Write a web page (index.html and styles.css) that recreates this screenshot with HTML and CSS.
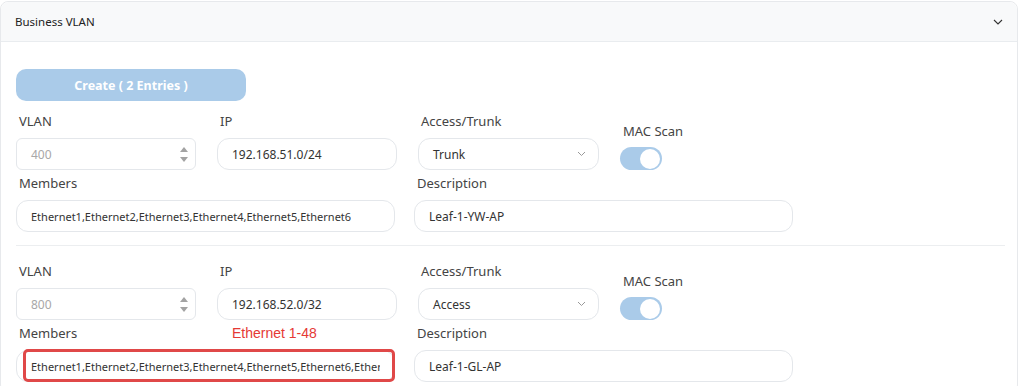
FILE: index.html
```html
<!DOCTYPE html>
<html lang="en">
<head>
  <meta charset="UTF-8" />
  <title>Business VLAN</title>
  <link rel="stylesheet" href="styles.css">
</head>
<body>

<section class="card">
  <div class="card-header">
    <span>Business VLAN</span>
    <svg class="chev" width="10" height="6" viewBox="0 0 10 6"><path d="M1 1l4 4 4-4" fill="none" stroke="#333" stroke-width="1.1"/></svg>
  </div>

  <div class="card-body">
    <button class="btn-create" disabled>Create ( 2 Entries )</button>

    <!-- entry 1 -->
    <div class="entry">
      <div class="field">
        <label>VLAN</label>
        <div class="ctl ctl-num">
          <span class="muted">400</span>
          <span class="spin"><i class="up"></i><i class="down"></i></span>
        </div>
      </div>
      <div class="field">
        <label>IP</label>
        <div class="ctl">192.168.51.0/24</div>
      </div>
      <div class="field">
        <label>Access/Trunk</label>
        <div class="ctl ctl-select">
          <span>Trunk</span>
          <svg width="9" height="6" viewBox="0 0 9 6"><path d="M1 1l3.5 3.5L8 1" fill="none" stroke="#999" stroke-width="1"/></svg>
        </div>
      </div>
      <div class="field field-mac">
        <label>MAC Scan</label>
        <div class="toggle"><span class="knob"></span></div>
      </div>

      <div class="field span-2">
        <label>Members</label>
        <div class="ctl ctl-long"><span class="clip">Ethernet1,Ethernet2,Ethernet3,Ethernet4,Ethernet5,Ethernet6</span></div>
      </div>
      <div class="field span-2 desc">
        <label>Description</label>
        <div class="ctl">Leaf-1-YW-AP</div>
      </div>
    </div>

    <hr class="divider">

    <!-- entry 2 -->
    <div class="entry">
      <div class="field">
        <label>VLAN</label>
        <div class="ctl ctl-num">
          <span class="muted">800</span>
          <span class="spin"><i class="up"></i><i class="down"></i></span>
        </div>
      </div>
      <div class="field">
        <label>IP</label>
        <div class="ctl">192.168.52.0/32</div>
      </div>
      <div class="field">
        <label>Access/Trunk</label>
        <div class="ctl ctl-select">
          <span>Access</span>
          <svg width="9" height="6" viewBox="0 0 9 6"><path d="M1 1l3.5 3.5L8 1" fill="none" stroke="#999" stroke-width="1"/></svg>
        </div>
      </div>
      <div class="field field-mac">
        <label>MAC Scan</label>
        <div class="toggle"><span class="knob"></span></div>
      </div>

      <div class="field span-2 marked">
        <label>Members</label>
        <span class="note">Ethernet 1-48</span>
        <div class="ctl ctl-long"><span class="clip">Ethernet1,Ethernet2,Ethernet3,Ethernet4,Ethernet5,Ethernet6,Ethernet7,Ethernet8</span></div>
        <span class="highlight"></span>
      </div>
      <div class="field span-2 desc">
        <label>Description</label>
        <div class="ctl">Leaf-1-GL-AP</div>
      </div>
    </div>
  </div>
</section>

</body>
</html>
```

FILE: styles.css
```css
* {
  margin: 0;
  padding: 0;
  box-sizing: border-box;
}
body {
  background: #fff;
  font-family: 'Noto Sans', sans-serif;
  color: #333;
  height: 386px;
  overflow: hidden;
}
.card {
  margin: 1px 2px 0 0;
  border: 1px solid #e7e9ec;
  border-radius: 8px;
  height: 392px;
}
.card-header {
  height: 40px;
  background: #f8f9fa;
  border-bottom: 1px solid #e9ecef;
  border-radius: 8px 8px 0 0;
  padding: 0 14px;
  display: flex;
  align-items: center;
  justify-content: space-between;
  font-size: 11.5px;
  color: #222;
}
.card-body {
  padding: 27px 0 0 15px;
}
.btn-create {
  width: 230px;
  height: 32px;
  border: none;
  border-radius: 10px;
  background: #aacbe9;
  color: #fff;
  font-family: 'Noto Sans', sans-serif;
  font-weight: 700;
  font-size: 12.5px;
  margin-bottom: 11px;
}
/* entry grid */
.entry {
  display: grid;
  grid-template-columns: 180px 180px 181px 90px;
  column-gap: 21px;
  row-gap: 4px;
}
.field label {
  display: block;
  font-size: 13px;
  line-height: 18px;
  color: #444;
  padding-left: 3px;
  margin-bottom: 8px;
  white-space: nowrap;
}
.span-2 {
  grid-column: span 2;
  width: 379px;
}
.desc {
  margin-left: -4px;
}
.field-mac {
  padding-top: 10px;
}
.field-mac label {
  margin-bottom: 7px;
}
.ctl {
  height: 32px;
  border: 1px solid #e4e7eb;
  border-radius: 12px;
  padding: 0 14px;
  display: flex;
  align-items: center;
  font-size: 12px;
  color: #333;
  background: #fff;
}
.ctl-long {
  font-size: 11px;
}
.ctl-num {
  border-radius: 6px;
  justify-content: space-between;
  padding-right: 7px;
}
.muted {
  color: #a8a8a8;
}
.spin {
  display: flex;
  flex-direction: column;
  gap: 5px;
}
.spin i {
  width: 0;
  height: 0;
  border-left: 4px solid transparent;
  border-right: 4px solid transparent;
}
.spin .up {
  border-bottom: 5px solid #a3a3a3;
}
.spin .down {
  border-top: 5px solid #a3a3a3;
}
.ctl-select {
  justify-content: space-between;
  padding-right: 12px;
}
.clip {
  white-space: nowrap;
  overflow: hidden;
}
.toggle {
  width: 42px;
  height: 23px;
  border-radius: 12px;
  background: #aacbe9;
  display: flex;
  justify-content: flex-end;
  align-items: center;
  padding: 2px;
}
.knob {
  width: 20px;
  height: 20px;
  border-radius: 50%;
  background: #fff;
}
.divider {
  border: none;
  border-top: 1px solid #eceef0;
  margin: 13px 12px 16px 0;
}
/* annotation */
.marked {
  position: relative;
}
.note {
  position: absolute;
  left: 216px;
  top: 1px;
  font-family: 'Liberation Sans', Arial, sans-serif;
  font-size: 14px;
  color: #e53935;
}
.highlight {
  position: absolute;
  left: 7px;
  right: 0;
  bottom: 0;
  height: 33px;
  border: 3px solid #e04848;
  border-radius: 5px;
}
```
